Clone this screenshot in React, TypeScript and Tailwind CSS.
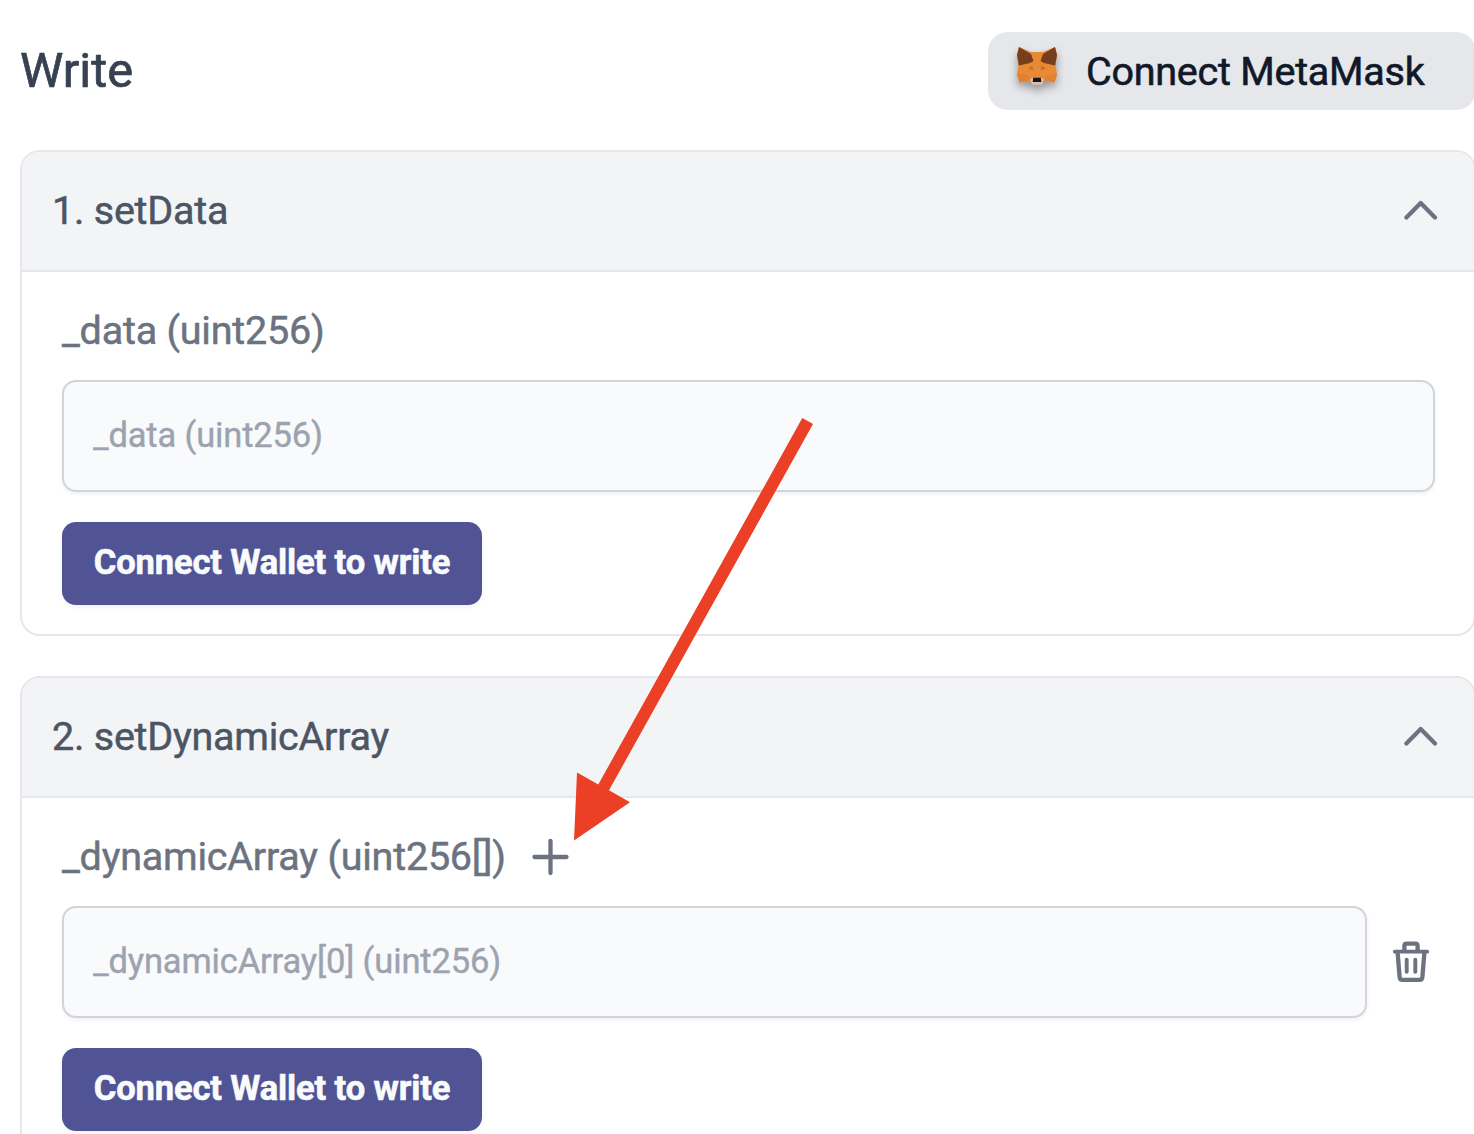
import React from "react";

function Fox() {
  return (
    <svg
      width="42"
      height="42"
      viewBox="0 0 42 42"
      className="relative -top-[3px] shrink-0 drop-shadow-[0_5px_4px_rgba(0,0,0,0.35)]"
    >
      <path d="M3 0L15 5H27L39 0L41 8L39.500 19L41 27L38.500 35.500L31 33.500L26 37H16L11 33.500L3.500 35.500L1 27L2.500 19L1 8Z" fill="#E88A35" />
      <path d="M3 0L15 7L17.500 14L14 16L3 18.500L1 8Z" fill="#763E1A" />
      <path d="M39 0L27 7L24.500 14L28 16L39 18.500L41 8Z" fill="#763E1A" />
      <path d="M1 27L12 28L14 32L11 33.500L3.500 35.500ZM41 27L30 28L28 32L31 33.500L38.500 35.500Z" fill="#E4812F" />
      <path d="M12 21.500L16 18.500L17.500 23.500ZM30 21.500L26 18.500L24.500 23.500Z" fill="#CF6D26" />
      <path d="M14 32L17 31H25L28 32L26 37.800H16Z" fill="#D7C1B3" />
      <path d="M17.200 30.700H24.800L25.300 35H16.700Z" fill="#161616" />
    </svg>
  );
}

function Chevron() {
  return (
    <svg width="34" height="20" viewBox="0 0 34 20" fill="none" className="mr-[36px] -mt-[2px]">
      <path d="M2.400 17.500L16.700 3L31 17.500" stroke="#6B7280" strokeWidth="4.200" strokeLinecap="round" strokeLinejoin="round" />
    </svg>
  );
}

function Plus() {
  return (
    <svg width="38" height="38" viewBox="0 0 38 38" fill="none" className="ml-[26px]">
      <path d="M18.500 3V35M2.500 19H34.500" stroke="#6B7280" strokeWidth="4.300" strokeLinecap="round" />
    </svg>
  );
}

function Trash() {
  return (
    <svg width="38" height="42" viewBox="0 0 38 42" fill="none" stroke="#6B7280" strokeWidth="4.300" strokeLinecap="round" strokeLinejoin="round" className="ml-[25px] shrink-0">
      <path d="M2.800 10.700H35.200" strokeWidth="3.800" />
      <path d="M5.600 11.500L7.600 36Q7.800 38.900 10.600 38.900H27.400Q30.200 38.900 30.400 36L32.400 11.500" />
      <path d="M12.400 10V4.800Q12.400 2.600 14.600 2.600H23.400Q25.600 2.600 25.600 4.800V10" />
      <path d="M14.700 18.800V30.800M23.300 18.800V30.800" strokeWidth="3.900" />
    </svg>
  );
}

function Card({ title, label, placeholder, dynamic = false }: { title: string; label: string; placeholder: string; dynamic?: boolean }) {
  return (
    <section className="h-[486px] shrink-0 overflow-hidden rounded-[20px] border-2 border-[#e5e7eb] bg-white">
      <header className="flex h-[120px] items-center justify-between border-b-2 border-[#e5e7eb] bg-[#f3f4f6] pl-[30px]">
        <h2 className="text-[39.5px] leading-[60px] tracking-[-0.23px] text-[#4b5563] [-webkit-text-stroke:0.5px_#4b5563]">{title}</h2>
        <Chevron />
      </header>
      <div className="flex flex-col items-start pl-[40px] pr-[38px] pt-[29px]">
        <label className="flex h-[60px] items-center text-[39.5px] tracking-[-0.22px] text-[#6b7280] [-webkit-text-stroke:0.5px_#6b7280]">
          {label}
          {dynamic && <Plus />}
        </label>
        <div className="mt-[19px] flex w-full items-center">
          <input
            placeholder={placeholder}
            className={`h-[112px] rounded-[14px] border-2 border-[#d1d5db] bg-[#f9fafb] pb-[2px] pl-[29px] text-[34.5px] tracking-[-0.15px] shadow-[0_2px_4px_rgba(0,0,0,0.06)] outline-none placeholder:text-[#9ca3af] placeholder:opacity-100 [-webkit-text-stroke:0.4px_#9ca3af] ${dynamic ? "w-[1305px]" : "w-[1373px]"}`}
          />
          {dynamic && <Trash />}
        </div>
        <button className="mt-[30px] h-[83px] w-[420px] whitespace-nowrap rounded-[14px] bg-[#505394] pb-[2px] text-[34.5px] font-bold tracking-[-0.13px] text-[#f9fafb] shadow-[0_2px_4px_rgba(0,0,0,0.06)] [-webkit-text-stroke:0.6px_#f9fafb]">
          Connect Wallet to write
        </button>
      </div>
    </section>
  );
}

export default function App() {
  return (
    <main className="relative h-[1134px] w-[1474px] overflow-hidden bg-white font-['Roboto',sans-serif]">
      <div className="flex w-[1456px] flex-col gap-[40px] pt-[32px] ml-[20px]">
        <div className="flex h-[78px] items-center justify-between">
          <h1 className="text-[48.8px] leading-[60px] text-[#374151] [-webkit-text-stroke:0.7px_#374151]">Write</h1>
          <button className="flex h-[78px] w-[488px] items-center whitespace-nowrap rounded-[20px] bg-[#e5e7eb] pl-[28px] text-[39.5px] tracking-[-0.25px] text-[#111827] [-webkit-text-stroke:0.6px_#111827]">
            <Fox />
            <span className="ml-[28px] pt-[2px]">Connect MetaMask</span>
          </button>
        </div>
        <Card title="1. setData" label="_data (uint256)" placeholder="_data (uint256)" />
        <Card title="2. setDynamicArray" label="_dynamicArray (uint256[])" placeholder="_dynamicArray[0] (uint256)" dynamic />
      </div>
      <svg className="pointer-events-none absolute left-[570px] top-[410px]" width="250" height="440" viewBox="570 410 250 440">
        <path d="M802.300 418L813 424L609 790.300L630 802.200L574 840.500L577 772.500L598.300 784.500Z" fill="#EB4026" />
      </svg>
    </main>
  );
}
